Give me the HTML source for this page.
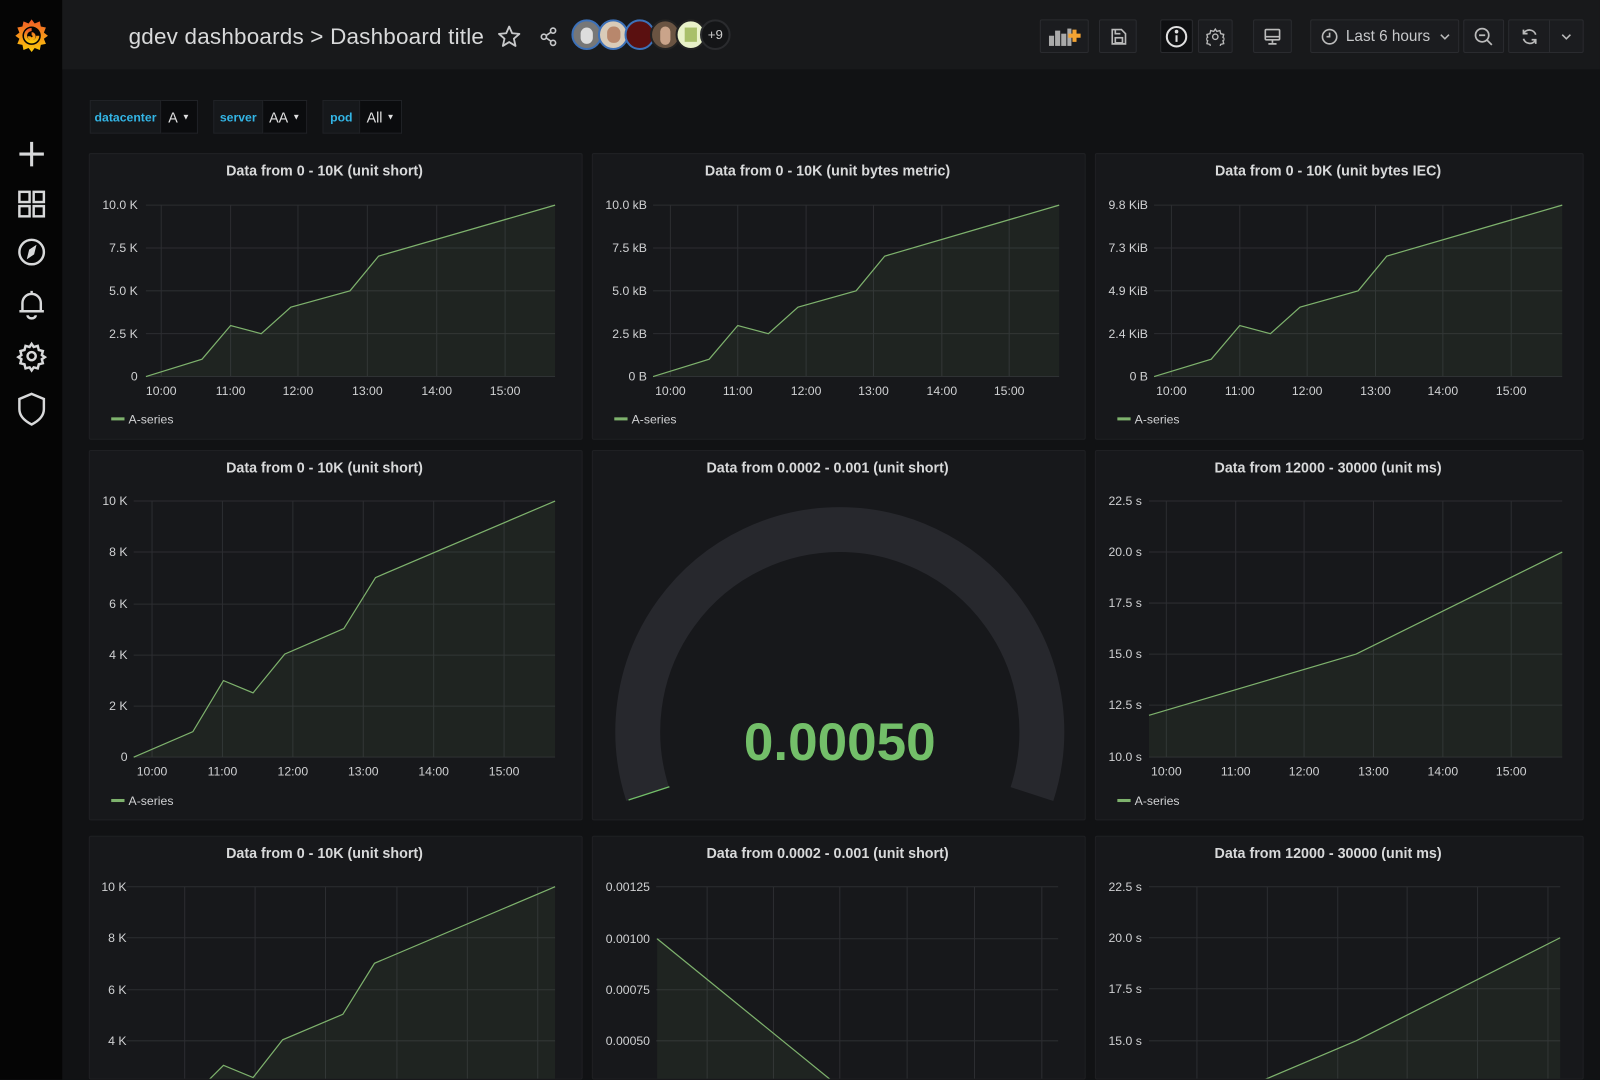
<!DOCTYPE html>
<html><head><meta charset="utf-8"><style>
html,body{margin:0;padding:0;background:#111214;width:1600px;height:1080px;overflow:hidden;font-family:"Liberation Sans",sans-serif;color:#d8d9da}
#o{position:relative;width:1600px;height:1080px;overflow:hidden;background:#111214}
#w{position:absolute;left:0;top:0;width:1568px;height:1058px;overflow:hidden;transform:scale(1.020408);transform-origin:0 0;background:#111214}
.abs{position:absolute}
#side{left:0;top:0;width:61px;height:1058px;background:#050505}
#top{left:61px;top:0;width:1507px;height:68px;background:#18191b}
.btn{position:absolute;top:19px;height:33px;border:1px solid #2a2b2f;border-radius:2px;background:#1b1c1f;box-sizing:border-box;display:flex;align-items:center;justify-content:center}
.var{position:absolute;top:98px;height:33px;display:flex;font-size:13px}
.var .l{background:#16181b;color:#33b5e5;display:flex;align-items:center;justify-content:center;font-size:12px;font-weight:bold;border:1px solid #202226;box-sizing:border-box}
.var .v{background:#0b0c0e;color:#e0e0e0;display:flex;align-items:center;justify-content:center;border:1px solid #202226;border-left:none;box-sizing:border-box;font-size:14px}
.panel{position:absolute;background:#17181b;border:1px solid #1f2023;box-sizing:border-box;border-radius:2px;overflow:hidden}
.panel svg{position:absolute;left:0;top:0}
.pt{position:absolute;left:0;right:22px;top:8px;text-align:center;font-size:14px;font-weight:bold;color:#d8d9da}
svg text{font-family:"Liberation Sans",sans-serif;fill:#d0d1d3;font-size:12px}
</style></head><body><div id="o"><div id="w">

<div id="side" class="abs">
<svg class="abs" style="left:12px;top:16px" width="38" height="38" viewBox="0 0 38 38">
<defs><linearGradient id="g" x1="0" y1="1" x2="0" y2="0"><stop offset="0" stop-color="#fbca0a"/><stop offset="1" stop-color="#f05a28"/></linearGradient></defs>
<path d="M19 3 L22 7 L27 5 L28 10 L33 11 L31 16 L35 19 L31 22 L33 27 L28 28 L27 33 L22 31 L19 35 L16 31 L11 33 L10 28 L5 27 L7 22 L3 19 L7 16 L5 11 L10 10 L11 5 L16 7 Z" fill="url(#g)"/>
<circle cx="19" cy="19" r="9" fill="#050505"/>
<path d="M19 13 a6 6 0 1 0 6 6 M19 17 a2.5 2.5 0 1 1 -2.5 2.5" stroke="url(#g)" stroke-width="3" fill="none"/>
</svg>
<svg class="abs" style="left:14px;top:135px" width="34" height="285" viewBox="0 0 34 285" fill="none" stroke="#d8d9da" stroke-width="2.4">
<path d="M17 4 V28 M5 16 H29" stroke-width="3"/>
<rect x="5" y="53" width="10" height="10"/><rect x="19" y="53" width="10" height="10"/><rect x="5" y="67" width="10" height="10"/><rect x="19" y="67" width="10" height="10"/>
<circle cx="17" cy="112" r="12"/><path d="M21 106 L19 114 L13 118 L15 110 Z" fill="#d8d9da" stroke-width="1"/>
<path d="M17 150 V153 M8 170 V162 a9 9 0 0 1 18 0 V170 M5 170 H29 M13 174 a4 3 0 0 0 8 0"/>
<circle cx="17" cy="214" r="4"/><path d="M17 202 l2 3 4-1 1 4 4 1-1 4 3 2-3 2 1 4-4 1-1 4-4-1-2 3-2-3-4 1-1-4-4-1 1-4-3-2 3-2-1-4 4-1 1-4 4 1z"/>
<path d="M17 251 L29 256 V266 C29 273 23 278 17 281 C11 278 5 273 5 266 V256 Z"/>
</svg>
</div>

<div id="top" class="abs">
<div class="abs" style="left:65px;top:23px;font-size:22px;letter-spacing:0.2px;color:#d8d9da">gdev dashboards &gt; Dashboard title</div>
<svg class="abs" style="left:426px;top:24px" width="24" height="24" viewBox="0 0 24 24"><path d="M12 2 L14.9 8.6 L22 9.2 L16.6 13.9 L18.2 21 L12 17.2 L5.8 21 L7.4 13.9 L2 9.2 L9.1 8.6 Z" fill="none" stroke="#c7c8ca" stroke-width="1.8" stroke-linejoin="round"/></svg>
<svg class="abs" style="left:467px;top:26px" width="20" height="20" viewBox="0 0 20 20" fill="none" stroke="#c7c8ca" stroke-width="1.6"><circle cx="14" cy="4" r="2.5"/><circle cx="5" cy="10" r="2.5"/><circle cx="14" cy="16" r="2.5"/><path d="M7 9 L12 5.5 M7 11 L12 14.5"/></svg>
<div class="abs" style="left:499px;top:19px;width:30px;height:30px;border-radius:50%;background:#777;border:2px solid #3d71b8;box-sizing:border-box"><div style="margin:6px auto 0;width:12px;height:16px;border-radius:6px;background:#ddd"></div></div>
<div class="abs" style="left:525px;top:19px;width:30px;height:30px;border-radius:50%;background:#d9cbb8;border:2px solid #3d71b8;box-sizing:border-box"><div style="margin:5px auto 0;width:13px;height:16px;border-radius:6px;background:#b8876c"></div></div>
<div class="abs" style="left:551px;top:19px;width:30px;height:30px;border-radius:50%;background:#5a1010;border:2px solid #3d71b8;box-sizing:border-box"></div>
<div class="abs" style="left:576px;top:19px;width:30px;height:30px;border-radius:50%;background:#6a5442;border:2px solid #222;box-sizing:border-box"><div style="margin:5px auto 0;width:10px;height:18px;border-radius:5px;background:#caa48a"></div></div>
<div class="abs" style="left:601px;top:19px;width:30px;height:30px;border-radius:50%;background:#e9f2c9;border:2px solid #222;box-sizing:border-box"><div style="margin:6px auto 0;width:12px;height:14px;background:#a9c06a"></div></div>
<div class="abs" style="left:625px;top:19px;width:30px;height:30px;border-radius:50%;background:#141517;border:2px solid #2a2b2e;box-sizing:border-box;font-size:13px;color:#ccc;text-align:center;line-height:26px">+9</div>
</div>

<div class="btn" style="left:1019px;width:48px"><svg width="34" height="22" viewBox="0 0 34 22"><rect x="2" y="10" width="5" height="10" fill="#aaa"/><rect x="8" y="5" width="5" height="15" fill="#aaa"/><rect x="14" y="8" width="5" height="12" fill="#aaa"/><rect x="20" y="3" width="4" height="17" fill="#aaa"/><path d="M27 4 V16 M21 10 H33" stroke="#f4a433" stroke-width="4"/></svg></div>
<div class="btn" style="left:1077px;width:37px"><svg width="18" height="18" viewBox="0 0 18 18" fill="none" stroke="#bbb" stroke-width="1.6"><path d="M3 2 H12 L16 6 V16 H3 Z"/><rect x="6" y="10" width="7" height="5"/><path d="M6 2 V6 H11"/></svg></div>
<div class="btn" style="left:1137px;width:32px;background:#0f1012"><svg width="22" height="22" viewBox="0 0 22 22" fill="none" stroke="#e0e0e0" stroke-width="2"><circle cx="11" cy="11" r="9.5"/><path d="M11 9.5 V16" /><circle cx="11" cy="6" r="0.8" fill="#e0e0e0"/></svg></div>
<div class="btn" style="left:1174px;width:34px"><svg width="18" height="18" viewBox="0 0 24 24" fill="none" stroke="#bbb" stroke-width="1.8"><circle cx="12" cy="12" r="3.5"/><path d="M12 2 l2 3 4-1 1 4 4 1-1 4 3 2-3 2 1 4-4 1-1 4-4-1-2 3-2-3-4 1-1-4-4-1 1-4-3-2 3-2-1-4 4-1 1-4 4 1z"/></svg></div>
<div class="btn" style="left:1228px;width:38px"><svg width="18" height="18" viewBox="0 0 18 18" fill="none" stroke="#bbb" stroke-width="1.6"><rect x="2" y="2" width="14" height="10" rx="1"/><path d="M2 9 H16 M9 12 V15 M5 16 H13"/></svg></div>
<div class="btn" style="left:1284px;width:146px;justify-content:flex-start;padding-left:9px;font-size:15px;color:#c7c8ca"><svg width="18" height="18" viewBox="0 0 18 18" fill="none" stroke="#bbb" stroke-width="1.6"><circle cx="9" cy="9" r="7"/><path d="M9 5 V9 H6"/></svg><span style="margin-left:7px">Last 6 hours</span><svg style="margin-left:9px" width="10" height="8" viewBox="0 0 10 8"><path d="M1 2 L5 6 L9 2" fill="none" stroke="#bbb" stroke-width="1.5"/></svg></div>
<div class="btn" style="left:1434px;width:40px"><svg width="20" height="20" viewBox="0 0 20 20" fill="none" stroke="#bbb" stroke-width="1.7"><circle cx="8.5" cy="8.5" r="6.5"/><path d="M5.5 8.5 H11.5 M13.5 13.5 L18 18"/></svg></div>
<div class="btn" style="left:1478px;width:74px;justify-content:flex-start"><div style="width:39px;height:31px;display:flex;align-items:center;justify-content:center;border-right:1px solid #2a2b2f"><svg width="20" height="20" viewBox="0 0 20 20" fill="none" stroke="#bbb" stroke-width="1.7"><path d="M16 8 A6.5 6.5 0 0 0 4 7 M4 12 A6.5 6.5 0 0 0 16 13 M4 3 V7 H8 M16 17 V13 H12"/></svg></div><div style="flex:1;display:flex;justify-content:center"><svg width="10" height="8" viewBox="0 0 10 8"><path d="M1 2 L5 6 L9 2" fill="none" stroke="#bbb" stroke-width="1.5"/></svg></div></div>

<div class="var" style="left:88px"><div class="l" style="width:70px">datacenter</div><div class="v" style="width:36px">A <span style="font-size:8px;margin-left:4px">▼</span></div></div>
<div class="var" style="left:209px"><div class="l" style="width:49px">server</div><div class="v" style="width:43px">AA <span style="font-size:8px;margin-left:4px">▼</span></div></div>
<div class="var" style="left:316px"><div class="l" style="width:37px">pod</div><div class="v" style="width:41px">All <span style="font-size:8px;margin-left:4px">▼</span></div></div>

<!-- Row 1 -->
<div class="panel" style="left:87px;top:150px;width:484px;height:281px"><div class="pt">Data from 0 - 10K (unit short)</div>
<svg width="484" height="281"><g stroke="#2c2d31" stroke-width="1"><path d="M55 50H456M55 92H456M55 134H456M55 176H456M55 218H456M70 50V218M138 50V218M204 50V218M272 50V218M340 50V218M407 50V218"/></g>
<path d="M55 218 L110 201 L138 168 L168 176 L197 150 L255 134 L283 100 L456 50 V218 Z" fill="rgba(126,178,109,0.08)"/>
<path d="M55 218 L110 201 L138 168 L168 176 L197 150 L255 134 L283 100 L456 50" fill="none" stroke="#7eb26d" stroke-width="1.2"/>
<g text-anchor="end"><text x="47" y="54">10.0 K</text><text x="47" y="96">7.5 K</text><text x="47" y="138">5.0 K</text><text x="47" y="180">2.5 K</text><text x="47" y="222">0</text></g>
<g text-anchor="middle"><text x="70" y="236">10:00</text><text x="138" y="236">11:00</text><text x="204" y="236">12:00</text><text x="272" y="236">13:00</text><text x="340" y="236">14:00</text><text x="407" y="236">15:00</text></g>
<rect x="21" y="258" width="13" height="3" fill="#7eb26d"/><text x="38" y="264">A-series</text></svg></div>

<div class="panel" style="left:580px;top:150px;width:484px;height:281px"><div class="pt">Data from 0 - 10K (unit bytes metric)</div>
<svg width="484" height="281"><g stroke="#2c2d31"><path d="M59 50H457M59 92H457M59 134H457M59 176H457M59 218H457M76 50V218M142 50V218M209 50V218M275 50V218M342 50V218M408 50V218"/></g>
<path d="M59 218 L114 201 L142 168 L172 176 L201 150 L258 134 L286 100 L457 50 V218 Z" fill="rgba(126,178,109,0.08)"/>
<path d="M59 218 L114 201 L142 168 L172 176 L201 150 L258 134 L286 100 L457 50" fill="none" stroke="#7eb26d" stroke-width="1.2"/>
<g text-anchor="end"><text x="53" y="54">10.0 kB</text><text x="53" y="96">7.5 kB</text><text x="53" y="138">5.0 kB</text><text x="53" y="180">2.5 kB</text><text x="53" y="222">0 B</text></g>
<g text-anchor="middle"><text x="76" y="236">10:00</text><text x="142" y="236">11:00</text><text x="209" y="236">12:00</text><text x="275" y="236">13:00</text><text x="342" y="236">14:00</text><text x="408" y="236">15:00</text></g>
<rect x="21" y="258" width="13" height="3" fill="#7eb26d"/><text x="38" y="264">A-series</text></svg></div>

<div class="panel" style="left:1073px;top:150px;width:479px;height:281px"><div class="pt">Data from 0 - 10K (unit bytes IEC)</div>
<svg width="479" height="281"><g stroke="#2c2d31"><path d="M57 50H457M57 92H457M57 134H457M57 176H457M57 218H457M74 50V218M141 50V218M207 50V218M274 50V218M340 50V218M407 50V218"/></g>
<path d="M57 218 L113 201 L141 168 L171 176 L200 150 L257 134 L285 100 L457 50 V218 Z" fill="rgba(126,178,109,0.08)"/>
<path d="M57 218 L113 201 L141 168 L171 176 L200 150 L257 134 L285 100 L457 50" fill="none" stroke="#7eb26d" stroke-width="1.2"/>
<g text-anchor="end"><text x="51" y="54">9.8 KiB</text><text x="51" y="96">7.3 KiB</text><text x="51" y="138">4.9 KiB</text><text x="51" y="180">2.4 KiB</text><text x="51" y="222">0 B</text></g>
<g text-anchor="middle"><text x="74" y="236">10:00</text><text x="141" y="236">11:00</text><text x="207" y="236">12:00</text><text x="274" y="236">13:00</text><text x="340" y="236">14:00</text><text x="407" y="236">15:00</text></g>
<rect x="21" y="258" width="13" height="3" fill="#7eb26d"/><text x="38" y="264">A-series</text></svg></div>

<!-- Row 2 -->
<div class="panel" style="left:87px;top:441px;width:484px;height:363px"><div class="pt">Data from 0 - 10K (unit short)</div>
<svg width="484" height="363"><g stroke="#2c2d31"><path d="M43 49H456M43 99H456M43 150H456M43 200H456M43 250H456M43 300H456M61 49V300M130 49V300M199 49V300M268 49V300M337 49V300M406 49V300"/></g>
<path d="M43 300 L101 275 L131 225 L160 237 L191 199 L249 174 L280 124 L456 49 V300 Z" fill="rgba(126,178,109,0.08)"/>
<path d="M43 300 L101 275 L131 225 L160 237 L191 199 L249 174 L280 124 L456 49" fill="none" stroke="#7eb26d" stroke-width="1.2"/>
<g text-anchor="end"><text x="37" y="53">10 K</text><text x="37" y="103">8 K</text><text x="37" y="154">6 K</text><text x="37" y="204">4 K</text><text x="37" y="254">2 K</text><text x="37" y="304">0</text></g>
<g text-anchor="middle"><text x="61" y="318">10:00</text><text x="130" y="318">11:00</text><text x="199" y="318">12:00</text><text x="268" y="318">13:00</text><text x="337" y="318">14:00</text><text x="406" y="318">15:00</text></g>
<rect x="21" y="341" width="13" height="3" fill="#7eb26d"/><text x="38" y="347">A-series</text></svg></div>

<div class="panel" style="left:580px;top:441px;width:484px;height:363px"><div class="pt">Data from 0.0002 - 0.001 (unit short)</div>
<svg width="484" height="363"><path d="M53.7 336.2 A198 198 0 1 1 430.3 336.2" fill="none" stroke="#27282d" stroke-width="44"/>
<path d="M35 342 L75 329" stroke="#73bf69" stroke-width="1.3"/>
<text x="242" y="303" text-anchor="middle" style="font-size:52px;font-weight:bold;fill:#73bf69">0.00050</text></svg></div>

<div class="panel" style="left:1073px;top:441px;width:479px;height:363px"><div class="pt">Data from 12000 - 30000 (unit ms)</div>
<svg width="479" height="363"><g stroke="#2c2d31"><path d="M52 49H457M52 99H457M52 149H457M52 199H457M52 249H457M52 300H457M69 49V300M137 49V300M204 49V300M272 49V300M340 49V300M407 49V300"/></g>
<path d="M52 259 L255 199 L457 99 V300 H52 Z" fill="rgba(126,178,109,0.08)"/>
<path d="M52 259 L255 199 L457 99" fill="none" stroke="#7eb26d" stroke-width="1.2"/>
<g text-anchor="end"><text x="45" y="53">22.5 s</text><text x="45" y="103">20.0 s</text><text x="45" y="153">17.5 s</text><text x="45" y="203">15.0 s</text><text x="45" y="253">12.5 s</text><text x="45" y="304">10.0 s</text></g>
<g text-anchor="middle"><text x="69" y="318">10:00</text><text x="137" y="318">11:00</text><text x="204" y="318">12:00</text><text x="272" y="318">13:00</text><text x="340" y="318">14:00</text><text x="407" y="318">15:00</text></g>
<rect x="21" y="341" width="13" height="3" fill="#7eb26d"/><text x="38" y="347">A-series</text></svg></div>

<!-- Row 3 -->
<div class="panel" style="left:87px;top:819px;width:484px;height:239px"><div class="pt">Data from 0 - 10K (unit short)</div>
<svg width="484" height="239"><g stroke="#2c2d31"><path d="M36 49H456M36 99H456M36 150H456M36 200H456M93 49V239M162 49V239M231 49V239M301 49V239M370 49V239M439 49V239"/></g>
<path d="M116 239 L131 224 L160 236 L189 199 L248 174 L279 124 L456 49 V239 Z" fill="rgba(126,178,109,0.08)"/>
<path d="M116 239 L131 224 L160 236 L189 199 L248 174 L279 124 L456 49" fill="none" stroke="#7eb26d" stroke-width="1.2"/>
<g text-anchor="end"><text x="36" y="53">10 K</text><text x="36" y="103">8 K</text><text x="36" y="154">6 K</text><text x="36" y="204">4 K</text></g></svg></div>

<div class="panel" style="left:580px;top:819px;width:484px;height:239px"><div class="pt">Data from 0.0002 - 0.001 (unit short)</div>
<svg width="484" height="239"><g stroke="#2c2d31"><path d="M62 49H456M62 100H456M62 150H456M62 200H456M112 49V239M177 49V239M242 49V239M308 49V239M374 49V239M440 49V239"/></g>
<path d="M63 100 L234 239 H63 Z" fill="rgba(126,178,109,0.08)"/>
<path d="M63 100 L234 239" fill="none" stroke="#7eb26d" stroke-width="1.2"/>
<g text-anchor="end"><text x="56" y="53">0.00125</text><text x="56" y="104">0.00100</text><text x="56" y="154">0.00075</text><text x="56" y="204">0.00050</text></g></svg></div>

<div class="panel" style="left:1073px;top:819px;width:479px;height:239px"><div class="pt">Data from 12000 - 30000 (unit ms)</div>
<svg width="479" height="239"><g stroke="#2c2d31"><path d="M52 49H455M52 99H455M52 149H455M52 200H455M99 49V239M168 49V239M237 49V239M305 49V239M374 49V239M443 49V239"/></g>
<path d="M163 239 L255 200 L455 99 V239 Z" fill="rgba(126,178,109,0.08)"/>
<path d="M163 239 L255 200 L455 99" fill="none" stroke="#7eb26d" stroke-width="1.2"/>
<g text-anchor="end"><text x="45" y="53">22.5 s</text><text x="45" y="103">20.0 s</text><text x="45" y="153">17.5 s</text><text x="45" y="204">15.0 s</text></g></svg></div>

</div></div></body></html>
